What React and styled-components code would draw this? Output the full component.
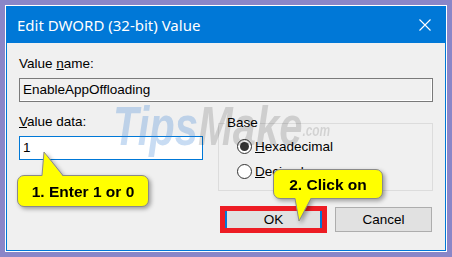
import React from "react";
import styled, { createGlobalStyle } from "styled-components";

const GlobalStyle = createGlobalStyle`
  html, body { margin: 0; padding: 0; }
  body { background: #8a86c8; width: 452px; height: 257px; overflow: hidden; }
`;

const Page = styled.div`
  width: 452px;
  height: 257px;
  padding: 5px 0 0 5px;
  box-sizing: border-box;
`;

const Window = styled.div`
  width: 442px;
  height: 247px;
  box-sizing: border-box;
  border: 1px solid #ffffff;
  display: flex;
  flex-direction: column;
`;

const TitleBar = styled.div`
  flex: none;
  height: 37px;
  background: #0078d7;
  display: flex;
  align-items: center;
  justify-content: space-between;
  padding: 0 15px 0 11px;
`;

const Title = styled.div`
  font-family: "Noto Sans", "Open Sans", sans-serif;
  font-size: 15px;
  line-height: 20px;
  color: #ffffff;
  padding-top: 1px;
`;

const CloseIcon = styled.svg`
  display: block;
  width: 12px;
  height: 12px;
  margin-top: 1px;
`;

const Body = styled.div`
  position: relative;
  flex: 1;
  background: #f0f0f0;
  border: 1px solid #0078d7;
  border-top: none;
  padding: 13px 12px 0 12px;
  font-family: "Liberation Sans", Arial, sans-serif;
  font-size: 13.5px;
  color: #000000;
`;

const Label = styled.div`
  line-height: 16px;
  margin-bottom: 6px;
`;

const TextBox = styled.input`
  display: block;
  width: 100%;
  height: 24px;
  box-sizing: border-box;
  margin: 0;
  border: 1px solid ${(p) => (p.$focused ? "#0078d7" : "#7a7a7a")};
  box-shadow: ${(p) => (p.readOnly ? "inset -1px -1px 0 #ffffff" : "none")};
  background: ${(p) => (p.readOnly ? "#f0f0f0" : "#ffffff")};
  font: inherit;
  color: #000;
  line-height: 20px;
  padding: 0 3px 2px 3px;
  outline: none;
`;

const DataRow = styled.div`
  display: flex;
  align-items: flex-start;
  margin-top: 12px;
`;

const Column = styled.div`
  width: 184px;
  flex: none;
`;

const GroupBox = styled.fieldset`
  margin: 1px 0 0 15px;
  padding: 0;
  width: 215px;
  box-sizing: border-box;
  min-width: 0;
  border: 1px solid #dcdcdc;
`;

const Legend = styled.legend`
  margin-left: 6px;
  padding: 0 2px;
  line-height: 16px;
`;

const RadioList = styled.div`
  padding: 3px 0 6px 18px;
`;

const RadioRow = styled.div`
  display: flex;
  align-items: center;
  height: 25px;
  gap: 3px;
  line-height: 25px;
`;

const RadioCircle = styled.span`
  width: 15px;
  height: 15px;
  box-sizing: border-box;
  border: 1px solid #333333;
  border-radius: 50%;
  background: #ffffff;
  display: flex;
  align-items: center;
  justify-content: center;
  flex: none;
  &::after {
    content: "";
    width: 9px;
    height: 9px;
    border-radius: 50%;
    background: #333333;
    display: ${(p) => (p.$checked ? "block" : "none")};
  }
`;

const ButtonRow = styled.div`
  display: flex;
  justify-content: flex-end;
  gap: 13px;
  margin: 16px 1px 0 0;
`;

const Button = styled.button`
  position: relative;
  width: 97px;
  height: 25px;
  box-sizing: border-box;
  margin: 0;
  padding: 0;
  border: ${(p) => (p.$default ? "2px solid #0078d7" : "1px solid #adadad")};
  background: #e1e1e1;
  font: inherit;
  color: #000;
`;

const Highlight = styled.span`
  position: absolute;
  left: -7px;
  right: -7px;
  top: -3px;
  bottom: -3px;
  border: 5px solid #ed1c24;
  z-index: 2;
  pointer-events: none;
`;

const Watermark = styled.div`
  position: absolute;
  left: 106px;
  top: 55px;
  z-index: 1;
  pointer-events: none;
  font-family: "Liberation Sans", Arial, sans-serif;
  font-style: italic;
  font-weight: bold;
  font-size: 56px;
  line-height: 56px;
  transform: scaleX(0.745);
  transform-origin: 0 0;
  white-space: nowrap;
`;

const Tips = styled.span`
  color: rgba(50, 125, 210, 0.27);
`;

const Make = styled.span`
  color: rgba(0, 0, 0, 0.14);
`;

const Dotcom = styled.span`
  font-size: 16px;
  vertical-align: 9px;
  color: rgba(0, 0, 0, 0.12);
`;

const Callout = styled.div`
  position: absolute;
  z-index: 3;
  left: ${(p) => p.$x}px;
  top: ${(p) => p.$y}px;
  width: ${(p) => p.$w}px;
  height: ${(p) => p.$h}px;
  filter: drop-shadow(2px 2px 2px rgba(0, 0, 0, 0.35));
`;

const Bubble = styled.div`
  width: 100%;
  height: 100%;
  box-sizing: border-box;
  background: #ffff00;
  border: 1px solid #8a8a8a;
  border-radius: 7px;
  display: flex;
  align-items: center;
  justify-content: center;
  font: bold 15.5px "Liberation Sans", Arial, sans-serif;
  color: #000;
  padding-top: 1px;
`;

const PointerSvg = styled.svg`
  position: absolute;
  left: ${(p) => p.$x}px;
  top: ${(p) => p.$y}px;
  overflow: visible;
`;

function Pointer({ x, y, w, h, fill, edge }) {
  return (
    <PointerSvg $x={x} $y={y} width={w} height={h} viewBox={`0 0 ${w} ${h}`}>
      <polygon points={fill} fill="#ffff00" />
      <polyline points={edge} fill="none" stroke="#8a8a8a" strokeWidth="1" />
    </PointerSvg>
  );
}

const Radio = ({ checked, accel, rest }) => (
  <RadioRow>
    <RadioCircle $checked={checked} />
    <span>
      <u>{accel}</u>
      {rest}
    </span>
  </RadioRow>
);

export default function App() {
  return (
    <>
      <GlobalStyle />
      <Page>
        <Window>
          <TitleBar>
            <Title>Edit DWORD (32-bit) Value</Title>
            <CloseIcon viewBox="0 0 12 12">
              <path d="M0.5 0.5 L11.5 11.5 M11.5 0.5 L0.5 11.5" stroke="#ffffff" strokeWidth="1.1" />
            </CloseIcon>
          </TitleBar>
          <Body>
            <Label>
              Value <u>n</u>ame:
            </Label>
            <TextBox readOnly value="EnableAppOffloading" />
            <DataRow>
              <Column>
                <Label>
                  <u>V</u>alue data:
                </Label>
                <TextBox $focused value="1" onChange={() => {}} />
              </Column>
              <GroupBox>
                <Legend>Base</Legend>
                <RadioList>
                  <Radio checked accel="H" rest="exadecimal" />
                  <Radio accel="D" rest="ecimal" />
                </RadioList>
              </GroupBox>
            </DataRow>
            <ButtonRow>
              <Button $default>
                OK
                <Highlight />
              </Button>
              <Button>Cancel</Button>
            </ButtonRow>

            <Watermark>
              <Tips>Tips</Tips>
              <Make>Make</Make>
              <Dotcom>.com</Dotcom>
            </Watermark>

            <Callout $x={10} $y={132} $w={132} $h={32}>
              <Bubble>1. Enter 1 or 0</Bubble>
              <Pointer
                x={20}
                y={-24}
                w={30}
                h={26}
                fill="5,25.5 7,1 26,25.5"
                edge="5,24.5 7,1 26,24.5"
              />
            </Callout>

            <Callout $x={266} $y={126} $w={110} $h={30}>
              <Bubble>2. Click on</Bubble>
              <Pointer
                x={18}
                y={28}
                w={24}
                h={26}
                fill="4,0.5 8,24 20,0.5"
                edge="4,1.5 8,24 20,1.5"
              />
            </Callout>
          </Body>
        </Window>
      </Page>
    </>
  );
}
